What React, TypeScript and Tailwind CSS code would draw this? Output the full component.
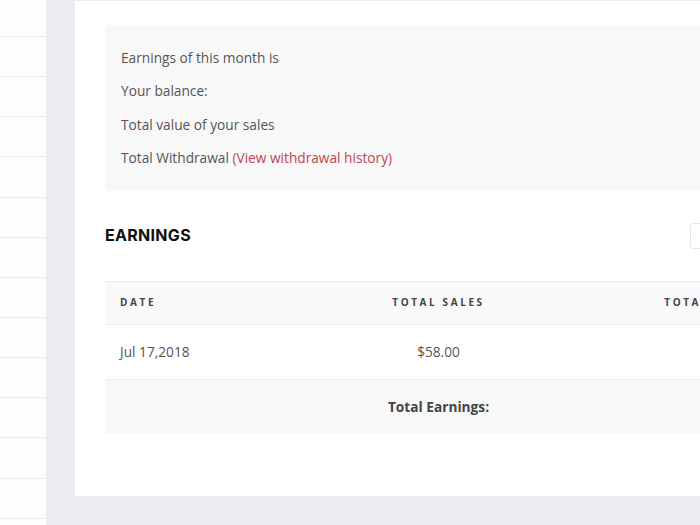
import React from "react";

export default function App() {
  const rows = Array.from({ length: 13 });
  return (
    <div
      className="flex h-[525px] w-[700px] overflow-hidden bg-[#ebecf2]"
      style={{ fontFamily: '"Open Sans", "Liberation Sans", sans-serif' }}
    >
      <div className="w-[46px] shrink-0 bg-[#fdfdfe]">
        <div className="h-[37px] border-b border-[#e9e9f0]" />
        {rows.map((_, i) => (
          <div key={i} className="h-[40.15px] border-b border-[#e9e9f0]" />
        ))}
      </div>
      <div className="ml-[29px] mt-[1px] h-[495px] w-[830px] shrink-0 bg-white px-[30px] pt-[24px]">
        <div className="bg-[#f8f8f8] px-[16px] pb-[23px] pt-[23px] text-[13.7px] leading-[20px] text-[#555]">
          <div className="flex flex-col gap-[13.3px]">
            <div>Earnings of this month is</div>
            <div>Your balance:</div>
            <div>Total value of your sales</div>
            <div>
              Total Withdrawal{" "}
              <span className="text-[#c2444f]">(View withdrawal history)</span>
            </div>
          </div>
        </div>
        <div className="flex h-[90px] items-center justify-between">
          <div
            className="mt-[-2px] text-[16px] font-bold tracking-[0.3px] text-[#111]"
            style={{ fontFamily: 'Inter, "Liberation Sans", sans-serif' }}
          >
            EARNINGS
          </div>
          <div className="mr-[125px] h-[26px] w-[60px] rounded-[3px] border border-[#e6e6ec] bg-white" />
        </div>
        <div className="border-t border-[#ececec]">
          <div className="grid h-[43px] grid-cols-[190px_287px_287px] items-center border-b border-[#ececec] bg-[#f9f9f9] text-[10px] font-bold tracking-[2.6px] text-[#444]">
            <div className="pl-[15px]">DATE</div>
            <div className="text-center">TOTAL SALES</div>
            <div className="text-center">TOTAL EARNINGS</div>
          </div>
          <div className="grid h-[55px] grid-cols-[190px_287px_287px] items-center border-b border-[#ececec] text-[13.7px] text-[#555]">
            <div className="pl-[15px]">Jul 17,2018</div>
            <div className="text-center">$58.00</div>
            <div className="text-center"></div>
          </div>
          <div className="grid h-[54px] grid-cols-[190px_287px_287px] items-center bg-[#f8f8f8] text-[13.7px] font-bold text-[#444]">
            <div></div>
            <div className="text-center">Total Earnings:</div>
            <div></div>
          </div>
        </div>
      </div>
    </div>
  );
}
